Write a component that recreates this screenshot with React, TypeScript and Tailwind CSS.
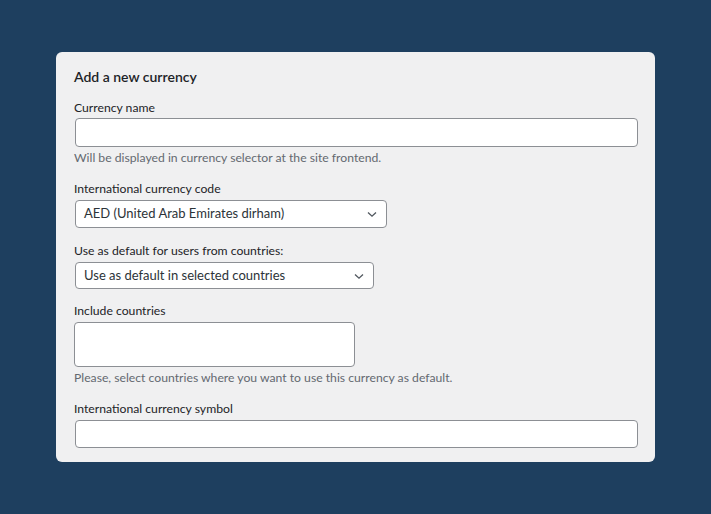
import React from 'react';

const Chevron: React.FC = () => (
    <svg width="12" height="12" viewBox="0 0 12 12" className="shrink-0">
        <path d="M2 4.5 6 8.2l4-3.7" fill="none" stroke="#50575e" strokeWidth="1.3" />
    </svg>
);

interface SelectBoxProps {
    value: string;
    width: string;
    height: string;
}

const SelectBox: React.FC<SelectBoxProps> = ({ value, width, height }) => (
    <div
        className={`flex items-center justify-between pl-2 pr-[8px] bg-white border border-[#8c8f94] rounded-[4px] text-[13px] text-[#2c3338] ${width} ${height}`}
    >
        <span>{value}</span>
        <Chevron />
    </div>
);

const Label: React.FC<{ children: React.ReactNode; mb?: string }> = ({ children, mb = 'mb-[3px]' }) => (
    <div className={`text-[12.2px] leading-[16px] text-[#1d2327] ${mb}`}>{children}</div>
);

const Help: React.FC<{ children: React.ReactNode }> = ({ children }) => (
    <div className="text-[12.2px] leading-[16px] text-[#646970] mt-[3px]">{children}</div>
);

export default function App() {
    return (
        <div
            className="w-[711px] h-[514px] bg-[#1e3f5f] pt-[52px] pl-[56px]"
            style={{ fontFamily: 'Lato, "Noto Sans", sans-serif' }}
        >
            <div className="w-[599px] h-[410px] bg-[#f0f0f1] rounded-[6px] pt-[15px] pl-[18px] pr-[17px]">
                <h2 className="text-[14px] font-semibold leading-[20px] text-[#1d2327] mb-[13px]">Add a new currency</h2>

                <Label mb="mb-[2px]">Currency name</Label>
                <div className="ml-[1px] h-[29px] bg-white border border-[#8c8f94] rounded-[4px]" />
                <Help>Will be displayed in currency selector at the site frontend.</Help>

                <div className="mt-[15px]">
                    <Label>International currency code</Label>
                    <div className="ml-[1px]">
                        <SelectBox value="AED (United Arab Emirates dirham)" width="w-[312px]" height="h-[28px]" />
                    </div>
                </div>

                <div className="mt-[15px]">
                    <Label>Use as default for users from countries:</Label>
                    <div className="ml-[1px]">
                        <SelectBox value="Use as default in selected countries" width="w-[299px]" height="h-[27px]" />
                    </div>
                </div>

                <div className="mt-[14px]">
                    <Label>Include countries</Label>
                    <div className="w-[281px] h-[45px] bg-white border border-[#8c8f94] rounded-[4px]" />
                    <Help>Please, select countries where you want to use this currency as default.</Help>
                </div>

                <div className="mt-[15px]">
                    <Label>International currency symbol</Label>
                    <div className="ml-[1px] h-[28px] bg-white border border-[#8c8f94] rounded-[4px]" />
                </div>
            </div>
        </div>
    );
}
